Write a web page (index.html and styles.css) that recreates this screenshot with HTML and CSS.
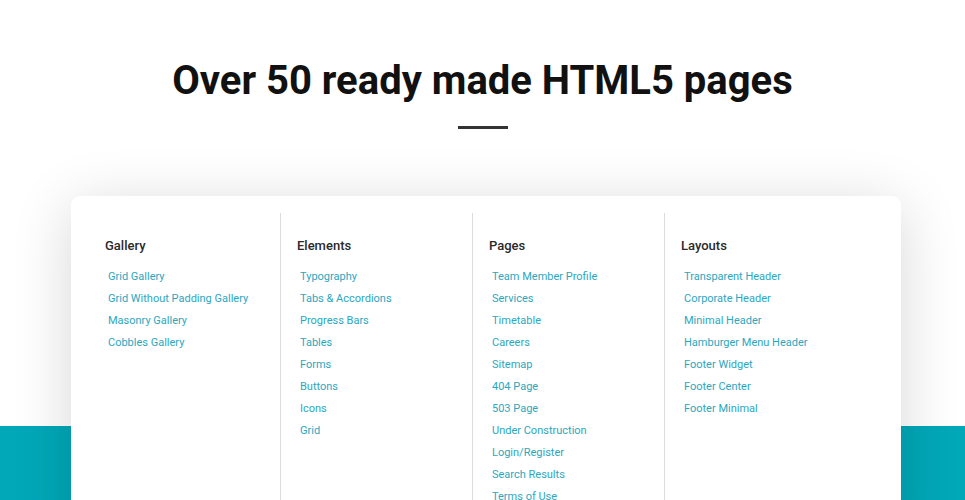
FILE: index.html
```html
<!DOCTYPE html>
<html lang="en">
<head>
    <meta charset="UTF-8">
    <meta name="viewport" content="width=device-width, initial-scale=1.0">
    <title>Ready made pages</title>
    <link rel="stylesheet" href="styles.css">
</head>
<body>
    <section class="intro">
        <h1>Over 50 ready made HTML5 pages</h1>
        <div class="divider"></div>
    </section>

    <section class="showcase">
        <div class="card">
            <div class="column">
                <h3>Gallery</h3>
                <ul>
                    <li><a href="#">Grid Gallery</a></li>
                    <li><a href="#">Grid Without Padding Gallery</a></li>
                    <li><a href="#">Masonry Gallery</a></li>
                    <li><a href="#">Cobbles Gallery</a></li>
                </ul>
            </div>
            <div class="column">
                <h3>Elements</h3>
                <ul>
                    <li><a href="#">Typography</a></li>
                    <li><a href="#">Tabs &amp; Accordions</a></li>
                    <li><a href="#">Progress Bars</a></li>
                    <li><a href="#">Tables</a></li>
                    <li><a href="#">Forms</a></li>
                    <li><a href="#">Buttons</a></li>
                    <li><a href="#">Icons</a></li>
                    <li><a href="#">Grid</a></li>
                </ul>
            </div>
            <div class="column">
                <h3>Pages</h3>
                <ul>
                    <li><a href="#">Team Member Profile</a></li>
                    <li><a href="#">Services</a></li>
                    <li><a href="#">Timetable</a></li>
                    <li><a href="#">Careers</a></li>
                    <li><a href="#">Sitemap</a></li>
                    <li><a href="#">404 Page</a></li>
                    <li><a href="#">503 Page</a></li>
                    <li><a href="#">Under Construction</a></li>
                    <li><a href="#">Login/Register</a></li>
                    <li><a href="#">Search Results</a></li>
                    <li><a href="#">Terms of Use</a></li>
                </ul>
            </div>
            <div class="column">
                <h3>Layouts</h3>
                <ul>
                    <li><a href="#">Transparent Header</a></li>
                    <li><a href="#">Corporate Header</a></li>
                    <li><a href="#">Minimal Header</a></li>
                    <li><a href="#">Hamburger Menu Header</a></li>
                    <li><a href="#">Footer Widget</a></li>
                    <li><a href="#">Footer Center</a></li>
                    <li><a href="#">Footer Minimal</a></li>
                </ul>
            </div>
        </div>
    </section>
</body>
</html>
```

FILE: styles.css
```css
body {
    margin: 0;
    font-family: 'Roboto', sans-serif;
    background-color: #fff;
    color: #222;
    height: 500px;
    overflow: hidden;
    background-image: linear-gradient(#fff 0, #fff 426px, #00a8b8 426px, #00a8b8 100%);
}

.intro {
    padding-top: 57px;
    text-align: center;
}

.intro h1 {
    margin: 0;
    font-size: 40px;
    font-weight: 700;
    line-height: 48px;
    color: #111;
}

.divider {
    width: 50px;
    height: 3px;
    margin: 21px auto 0;
    background-color: #333;
}

.showcase {
    padding: 67px 64px 0 71px;
}

.card {
    display: grid;
    grid-template-columns: repeat(4, 192px);
    padding: 17px 0 0 17px;
    height: 330px;
    background-color: #fff;
    border-radius: 9px;
    box-shadow: 0 10px 60px rgba(0, 0, 0, 0.16);
}

.column {
    padding: 24px 0 0 17px;
}

.column + .column {
    border-left: 1px solid #dcdcdc;
    padding-left: 16px;
}

.column h3 {
    margin: 0 0 11px;
    font-size: 13px;
    font-weight: 500;
    line-height: 18px;
    color: #2a2a2a;
}

.column ul {
    list-style: none;
    margin: 0;
    padding: 0 0 0 3px;
}

.column li {
    font-size: 11px;
    line-height: 22px;
}

.column a {
    color: #2ba7bf;
    text-decoration: none;
}
```
